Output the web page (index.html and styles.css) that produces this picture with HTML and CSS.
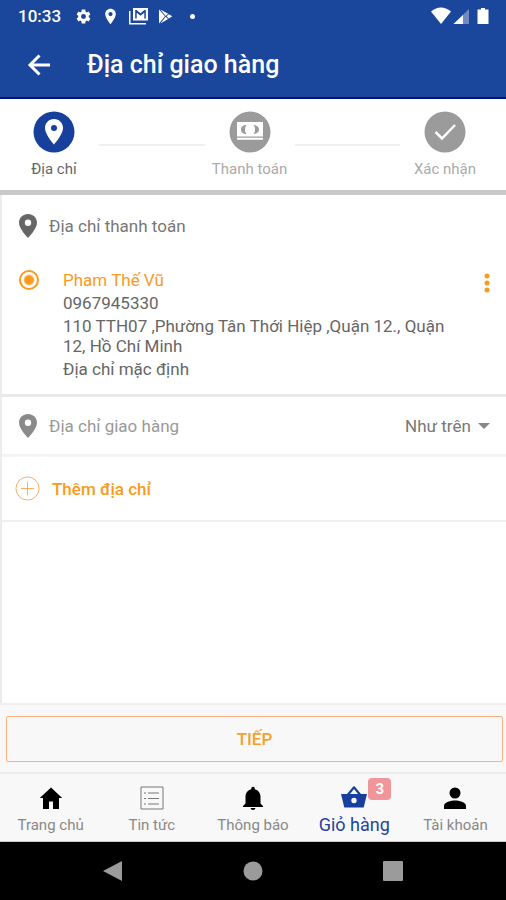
FILE: index.html
```html
<!DOCTYPE html>
<html lang="vi">
<head>
<meta charset="utf-8">
<meta name="viewport" content="width=device-width, initial-scale=1">
<title>Địa chỉ giao hàng</title>
<link rel="stylesheet" href="styles.css">
</head>
<body>
<header class="top">
  <div class="status">
    <span class="clock">10:33</span>
    <svg class="status-icon" viewBox="0 0 24 24"><path fill-rule="evenodd" d="M19.4 13a7.500 7.500 0 0 0 0-2l2.300-1.800-2.400-4.100-2.700 1.100a8 8 0 0 0-1.700-1L14.500 2h-5l-.4 3.200a8 8 0 0 0-1.700 1L4.700 5.100 2.300 9.200 4.600 11a7.500 7.500 0 0 0 0 2l-2.300 1.800 2.400 4.100 2.700-1.100a8 8 0 0 0 1.700 1l.4 3.200h5l.4-3.200a8 8 0 0 0 1.700-1l2.700 1.100 2.400-4.100zM12 15.500a3.500 3.500 0 1 1 0-7 3.500 3.500 0 0 1 0 7z"/></svg>
    <svg class="status-icon" viewBox="0 0 24 24"><path fill-rule="evenodd" d="M12 1C7.600 1 4.500 4.300 4.500 8.500 4.500 14 12 23 12 23s7.500-9 7.500-14.500C19.500 4.300 16.400 1 12 1zm0 10.500a3 3 0 1 1 0-6 3 3 0 0 1 0 6z"/></svg>
    <svg class="status-icon mail" viewBox="0 0 20 18"><path fill-rule="evenodd" d="M4 1h15v12.500H4zM6.200 3v8.500h1.500V5.800l3.800 3 3.800-3v5.700h1.500V3h-1.400l-3.900 3.200L7.600 3z"/><path d="M0 4h1.500v12H17v1.500H0z"/></svg>
    <svg class="status-icon play" viewBox="4 0 20 24"><path d="M4 2l8.500 9.500L4 22zM6 2l11 6-3.500 3.200zM18 8.800l5 2.900-5 3-3.200-3zM6 22l11-6.500-3.500-3.200z"/></svg>
    <span class="dot"></span>
    <span class="spacer"></span>
    <svg class="signals" viewBox="0 0 60 18"><path d="M0 4.500Q10-3.500 20 4.500L10 17z"/><path d="M22.500 17L38 2v15z" fill="#6f8bc2"/><path d="M22.500 17L32 8v9z"/><path d="M50 1h4v1.500h3.500V17h-11V2.500H50z"/></svg>
  </div>
  <div class="appbar">
    <button class="back" aria-label="Quay lại"><svg viewBox="0 0 24 24"><path d="M23 12H3M12.500 2.500L3 12l9.500 9.500"/></svg></button>
    <h1>Địa chỉ giao hàng</h1>
  </div>
</header>

<main>
  <ol class="steps">
    <li class="step active">
      <svg viewBox="0 0 42 42"><circle cx="21" cy="21" r="20.500"/><path fill="#fff" fill-rule="evenodd" d="M21 8c-5.300 0-9 4-9 9 0 6.500 9 16.500 9 16.500S30 23.500 30 17c0-5-3.700-9-9-9zm0 12a3 3 0 1 1 0-6 3 3 0 0 1 0 6z"/></svg>
      <span>Địa chỉ</span>
    </li>
    <li class="line"></li>
    <li class="step">
      <svg viewBox="0 0 42 42"><circle cx="21" cy="21" r="20.500"/><path fill="#fff" d="M8 11h26v14.500H8zM8 26.800h26v2H8z"/><path d="M17.500 14C14 14 12 16 12 18.500s2 4.500 5.500 4.500c-2-2.500-2-6.500 0-9zM24.500 14c3.500 0 5.500 2 5.500 4.500S28 23 24.500 23c2-2.500 2-6.500 0-9z"/></svg>
      <span>Thanh toán</span>
    </li>
    <li class="line"></li>
    <li class="step">
      <svg viewBox="0 0 42 42"><circle cx="21" cy="21" r="20.500"/><path fill="none" stroke="#fff" stroke-width="2.500" d="M11.500 21l6.500 6.500L31 14"/></svg>
      <span>Xác nhận</span>
    </li>
  </ol>

  <div class="content">
    <section class="billing">
      <h2 class="heading"><svg class="pin" viewBox="0 0 18 24"><path fill-rule="evenodd" d="M9 0C3.900 0 0 3.900 0 8.800 0 15 9 24 9 24s9-9 9-15.200C18 3.900 14.100 0 9 0zm0 12a3.200 3.200 0 1 1 0-6.400A3.200 3.200 0 0 1 9 12z"/></svg>Địa chỉ thanh toán</h2>
      <div class="address">
        <input type="radio" id="addr" name="addr" checked>
        <label for="addr">
          <span class="name">Pham Thế Vũ</span>
          <span>0967945330</span>
          <span class="street">110 TTH07 ,Phường Tân Thới Hiệp ,Quận 12., Quận 12, Hồ Chí Minh</span>
          <span>Địa chỉ mặc định</span>
        </label>
        <button class="more" aria-label="Tùy chọn"><svg viewBox="0 0 6 20"><circle cx="3" cy="3" r="2.500"/><circle cx="3" cy="10" r="2.500"/><circle cx="3" cy="17" r="2.500"/></svg></button>
      </div>
    </section>
    <section class="shipping">
      <label class="heading" for="ship"><svg class="pin" viewBox="0 0 18 24"><path fill-rule="evenodd" d="M9 0C3.900 0 0 3.900 0 8.800 0 15 9 24 9 24s9-9 9-15.200C18 3.900 14.100 0 9 0zm0 12a3.200 3.200 0 1 1 0-6.400A3.200 3.200 0 0 1 9 12z"/></svg>Địa chỉ giao hàng</label>
      <div class="picker">
        <select id="ship"><option>Như trên</option></select>
        <svg viewBox="0 0 12 6"><path d="M0 0h12L6 6z"/></svg>
      </div>
    </section>
    <button class="add">
      <svg viewBox="0 0 26 26"><circle cx="13" cy="13" r="12"/><path d="M13 6v14M6 13h14"/></svg>
      Thêm địa chỉ
    </button>
  </div>
</main>

<div class="action"><button class="next">TIẾP</button></div>

<nav class="tabs">
  <a href="#"><svg viewBox="0 0 24 24"><path d="M12 1.500L.8 12H4v11h6v-7.500h4V23h6V12h3.200z"/></svg>Trang chủ</a>
  <a href="#"><svg viewBox="0 0 24 24"><path fill="none" stroke="#777" d="M1 1h22v22H1zM8 7h11M8 12.500h11M8 18h11M4 7h2M4 12.500h2M4 18h2"/></svg>Tin tức</a>
  <a href="#"><svg viewBox="0 0 24 24"><path d="M12 24a2.500 2.500 0 0 0 2.500-2h-5A2.500 2.500 0 0 0 12 24zM19.500 17.500V11c0-4-2.200-7-5.700-7.800v-.7a1.800 1.800 0 0 0-3.600 0v.7C6.700 4 4.500 7 4.500 11v6.500L2 20v1h20v-1z"/></svg>Thông báo</a>
  <a href="#" class="current"><span class="basket"><svg viewBox="0 0 26 24"><path fill-rule="evenodd" d="M0 8h6l5.800-7a1.500 1.500 0 0 1 2.400 0L20 8h6l-3.300 13.500H3.300zM13 3L9 8h8zM13 11.800a2.700 2.700 0 1 0 0 5.400 2.700 2.700 0 0 0 0-5.400z"/></svg><span class="badge">3</span></span>Giỏ hàng</a>
  <a href="#"><svg viewBox="0 0 24 24"><circle cx="12" cy="7" r="5.500"/><path d="M1 23v-3c0-4 7-5.500 11-5.500S23 16 23 20v3z"/></svg>Tài khoản</a>
</nav>

<footer class="system">
  <button aria-label="Trở về"><svg viewBox="0 0 20 20"><path d="M19 0v20L0 10z"/></svg></button>
  <button aria-label="Màn hình chính"><svg viewBox="0 0 20 20"><circle cx="10" cy="10" r="9.500"/></svg></button>
  <button aria-label="Gần đây"><svg viewBox="0 0 20 20"><rect width="20" height="20" rx="1"/></svg></button>
</footer>
</body>
</html>
```
FILE: styles.css
```css
* { box-sizing: border-box; }
body {
  margin: 0;
  min-height: 100vh;
  display: flex;
  flex-direction: column;
  font-family: Roboto, "Noto Sans", sans-serif;
  font-size: 17px;
  line-height: 20px;
  color: #666;
  background: #fff;
}
svg { display: block; flex: none; fill: currentColor; }
button { margin: 0; padding: 0; border: 0; background: none; font: inherit; color: inherit; cursor: pointer; }
a { color: inherit; text-decoration: none; }

.top { background: #1a469b; color: #fff; border-bottom: 2px solid #00107f; }
.status { display: flex; align-items: center; gap: 10px; height: 32px; padding: 0 15px 0 18px; }
.clock { font-size: 17px; font-weight: 500; margin-right: 4px; }
.status-icon { width: 17px; height: 17px; }
.mail { width: 20px; height: 18px; }
.play { width: 14px; }
.dot { width: 5px; height: 5px; border-radius: 50%; background: currentColor; margin-left: 7px; }
.spacer { flex: 1; }
.signals { width: 60px; height: 18px; }
.appbar { display: flex; align-items: center; gap: 36px; height: 65px; padding: 0 27px; }
.back svg { width: 24px; height: 24px; fill: none; stroke: currentColor; stroke-width: 3; }
h1 { margin: 0; font-size: 25px; line-height: 32px; font-weight: 500; }

main { flex: 1; display: flex; flex-direction: column; }
.steps {
  display: flex;
  margin: 0;
  padding: 12px 24px 11px 17px;
  list-style: none;
  border-bottom: 5px solid #c9c9c9;
}
.step { display: flex; flex-direction: column; align-items: center; gap: 6px; width: 74px; font-size: 15px; color: #aaa; white-space: nowrap; }
.step svg { width: 42px; height: 42px; color: #9b9b9b; }
.active { color: #666; }
.active svg { color: #173f9c; }
.line { flex: 1; height: 2px; margin: 33px 8px 0; background: #efefef; }

.content { flex: 1; border-left: 2px solid #ececec; }
.heading { display: flex; align-items: center; gap: 12px; margin: 0; font-size: 17px; font-weight: 400; line-height: 24px; color: #777; }
.pin { width: 18px; height: 24px; color: #666; }
.billing { padding: 19px 16px 15px 17px; border-bottom: 3px solid #e9e9e9; }
.address { display: flex; align-items: flex-start; margin-top: 32px; }
.address input {
  appearance: none;
  flex: none;
  width: 20px;
  height: 20px;
  margin: 0;
  border: 2px solid #f99a1c;
  border-radius: 50%;
  background: radial-gradient(circle, #f99a1c 4px, transparent 6px);
}
.address label { flex: 1; display: flex; flex-direction: column; gap: 3px; margin-left: 24px; padding-right: 24px; }
.name { color: #f99a1c; }
.more { padding: 3px 0; color: #f99a1c; }
.more svg { width: 6px; height: 20px; }
.shipping { display: flex; align-items: center; justify-content: space-between; height: 60px; padding: 0 16px 0 17px; border-bottom: 3px solid #f4f4f4; }
.shipping .heading { color: #999; }
.shipping .pin { color: #8a8a8a; }
.picker { display: flex; align-items: center; gap: 7px; color: #888; }
.picker svg { width: 12px; height: 6px; }
select { appearance: none; padding: 0; border: 0; background: none; font: inherit; color: #777; }
.add { display: flex; align-items: center; gap: 12px; width: 100%; height: 65px; padding: 0 13px; border-bottom: 2px solid #efefef; font-weight: 500; color: #f99a1c; }
.add svg { width: 25px; height: 25px; fill: none; stroke: #fbab5f; }

.action { padding: 11px 3px 10px 6px; background: #f8f8f8; border-top: 2px solid #efefef; }
.next { display: block; width: 100%; height: 46px; border: 1px solid #fbb080; border-radius: 2px; font-weight: 500; color: #f6a02c; }

.tabs { display: flex; height: 70px; padding-top: 12px; background: #f8f8f8; border-top: 2px solid #ececec; border-bottom: 1px solid #ccc; }
.tabs a { flex: 1; display: flex; flex-direction: column; align-items: center; gap: 5px; font-size: 15px; color: #888; white-space: nowrap; }
.tabs svg { width: 24px; height: 24px; color: #000; }
.tabs .current { font-size: 18px; color: #2443a0; }
.basket { position: relative; }
.current svg { width: 26px; color: #173f9c; }
.badge { position: absolute; left: 27px; top: -8px; width: 23px; height: 22px; border-radius: 4px; background: #f0959a; color: #fff; font-size: 15px; line-height: 22px; font-weight: 700; text-align: center; }

.system { display: flex; justify-content: center; gap: 120px; height: 58px; align-items: center; background: #000; color: #9b9b9b; }
.system svg { width: 20px; height: 20px; }
```
